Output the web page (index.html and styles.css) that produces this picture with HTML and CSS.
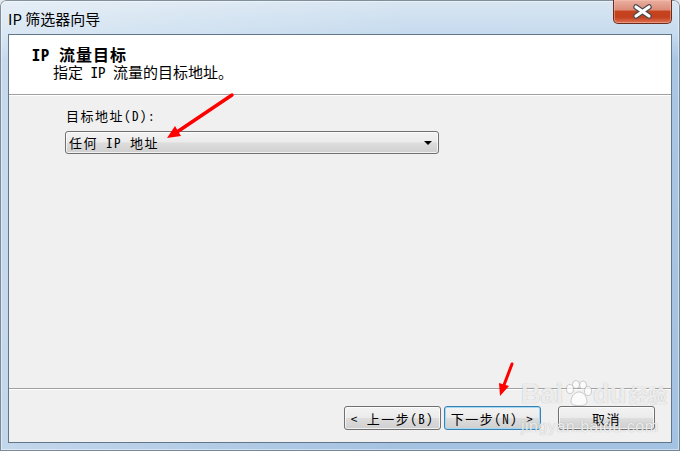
FILE: index.html
```html
<!DOCTYPE html>
<html lang="zh-CN">
<head>
  <meta charset="UTF-8">
  <title>IP 筛选器向导</title>
  <link rel="stylesheet" href="styles.css">
</head>
<body>
  <div class="window">
    <div class="titlebar">
      <span class="title">IP 筛选器向导</span>
      <button class="close" aria-label="关闭">
        <svg width="19" height="15" viewBox="0 0 19 15">
          <path d="M3 3 L16 12 M16 3 L3 12" stroke="#4a4a4a" stroke-width="5.5" stroke-linecap="round"/>
          <path d="M3 3 L16 12 M16 3 L3 12" stroke="#fff" stroke-width="3.2" stroke-linecap="round"/>
        </svg>
      </button>
    </div>

    <div class="client">
      <header class="wizard-head">
        <h1>IP 流量目标</h1>
        <p>指定 IP 流量的目标地址。</p>
      </header>

      <section class="wizard-body">
        <label class="field-label">目标地址(D):</label>
        <div class="combo">
          <span>任何 IP 地址</span>
          <i class="caret"></i>
        </div>
      </section>

      <footer class="wizard-foot">
        <button class="btn">&lt; 上一步(B)</button>
        <button class="btn default">下一步(N) &gt;</button>
        <button class="btn cancel">取消</button>
      </footer>
    </div>

    <!-- red annotation arrows drawn over the dialog -->
    <svg class="marks" width="680" height="451" viewBox="0 0 680 451">
      <line x1="232" y1="95" x2="177" y2="132" stroke="#f00" stroke-width="3.5" stroke-linecap="round"/>
      <polygon points="167,138 181,136 175,126" fill="#f00"/>
      <line x1="512" y1="364" x2="504" y2="385" stroke="#f00" stroke-width="3" stroke-linecap="round"/>
      <polygon points="500,396 509,386 499,383" fill="#f00"/>
    </svg>

    <div class="watermark">
      <div class="wm-logo">
        <span>Bai</span>
        <svg width="30" height="28" viewBox="0 0 30 28">
          <g fill="rgba(255,255,255,0.75)" stroke="rgba(150,150,150,0.45)" stroke-width="1">
            <ellipse cx="7" cy="9" rx="3.5" ry="4.5"/>
            <ellipse cx="13" cy="4.5" rx="3.5" ry="4"/>
            <ellipse cx="20" cy="5" rx="3.5" ry="4"/>
            <ellipse cx="25" cy="11" rx="3.5" ry="4.5"/>
            <path d="M8 22 C8 15 13 12 16 12 C20 12 24 16 24 22 C24 27 8 27 8 22 Z"/>
          </g>
        </svg>
        <span>du</span>
        <span class="wm-cn">经验</span>
      </div>
      <div class="wm-url">jingyan.baidu.com</div>
    </div>
  </div>
</body>
</html>
```

FILE: styles.css
```css
*, *::before, *::after {
  box-sizing: border-box;
  margin: 0;
  padding: 0;
}

body {
  background: #e9ecef;
  font-family: "Noto Sans Mono CJK SC", "Noto Sans CJK SC", monospace;
  color: #000;
}

.window {
  position: relative;
  width: 680px;
  height: 451px;
  display: flex;
  flex-direction: column;
  padding: 0 8px 8px 8px;
  border-radius: 6px 6px 0 0;
  background:
    linear-gradient(90deg, rgba(255, 255, 255, 0.35), rgba(255, 255, 255, 0) 60%),
    linear-gradient(180deg, #d9e6f2 0px, #c6dbee 34px, #a9c6e3 60px, #a4c2e1 100%);
  box-shadow: inset 0 0 0 1px rgba(40, 60, 80, 0.55), inset 0 0 0 2px rgba(255, 255, 255, 0.45);
  overflow: hidden;
}

.titlebar {
  height: 34px;
  display: flex;
  align-items: flex-start;
  justify-content: space-between;

  .title {
    font-family: "Noto Sans CJK SC", sans-serif;
    font-size: 15px;
    line-height: 22px;
    padding-top: 8px;
  }

  .close {
    width: 59px;
    height: 24px;
    display: grid;
    place-content: center;
    border: 1px solid #6b2c20;
    border-top: none;
    border-radius: 0 0 5px 5px;
    background: linear-gradient(180deg, #eab0a1 0%, #dc8d79 42%, #c5431f 50%, #c4401f 75%, #dd7352 100%);
    box-shadow: inset 0 0 0 1px rgba(255, 200, 180, 0.45);
  }
}

.client {
  flex: 1;
  display: flex;
  flex-direction: column;
  border: 1px solid #62768a;
  background: #f0f0f0;
}

.wizard-head {
  height: 60px;
  padding: 10px 0 0 23px;
  background: #fff;
  border-bottom: 1px solid #a0a0a0;

  h1 {
    font-size: 16px;
    font-weight: 700;
    line-height: 18px;
    letter-spacing: 1px;
  }

  p {
    font-size: 15px;
    line-height: 18px;
    padding-left: 21px;
  }
}

.wizard-body {
  flex: 1;
  display: flex;
  flex-direction: column;
  align-items: flex-start;
  padding: 12px 0 0 56px;
  border-top: 1px solid #fff;
  font-size: 13px;
  letter-spacing: 1.5px;

  .field-label {
    line-height: 16px;
    margin-bottom: 7px;
    padding-left: 1px;
  }
}

.combo {
  width: 374px;
  height: 23px;
  display: flex;
  align-items: center;
  justify-content: space-between;
  padding: 0 6px 0 3px;
  border: 1px solid #707070;
  border-radius: 3px;
  background: linear-gradient(180deg, #f3f3f3 0%, #ebebeb 48%, #dddddd 52%, #cfcfcf 100%);
  box-shadow: inset 0 0 0 1px rgba(255, 255, 255, 0.7);

  .caret {
    width: 0;
    height: 0;
    border-top: 4px solid #000;
    border-left: 4px solid transparent;
    border-right: 4px solid transparent;
  }
}

.wizard-foot {
  height: 54px;
  display: flex;
  justify-content: flex-end;
  align-items: flex-start;
  gap: 3px;
  padding: 17px 16px 0 0;
  border-top: 1px solid #a0a0a0;
  box-shadow: inset 0 1px 0 #fff;
}

.btn {
  width: 97px;
  height: 24px;
  font-family: inherit;
  font-size: 13px;
  letter-spacing: 1.5px;
  color: #000;
  border: 1px solid #707070;
  border-radius: 3px;
  background: linear-gradient(180deg, #f3f3f3 0%, #ebebeb 48%, #dddddd 52%, #cfcfcf 100%);
  box-shadow: inset 0 0 0 1px rgba(255, 255, 255, 0.7);

  &.default {
    border-color: #3c7fb1;
    box-shadow: inset 0 0 0 1px #9fd9f6;
  }

  &.cancel {
    margin-left: 14px;
  }
}

.marks {
  position: absolute;
  left: 0;
  top: 0;
  pointer-events: none;
}

.watermark {
  position: absolute;
  left: 521px;
  top: 376px;
  font-family: "Liberation Sans", "Noto Sans CJK SC", sans-serif;
  color: rgba(255, 255, 255, 0.8);
  text-shadow: 0 0 1px rgba(120, 120, 120, 0.6);
  pointer-events: none;

  .wm-logo {
    display: flex;
    align-items: flex-end;
    height: 32px;
    font-size: 27px;
    font-weight: 700;
    line-height: 28px;
  }

  .wm-cn {
    font-family: "Noto Sans CJK SC", sans-serif;
    font-size: 19px;
    line-height: 26px;
    margin-left: 3px;
  }

  .wm-url {
    font-size: 16px;
    line-height: 20px;
    margin-top: 9px;
    letter-spacing: 0.5px;
  }
}
```
